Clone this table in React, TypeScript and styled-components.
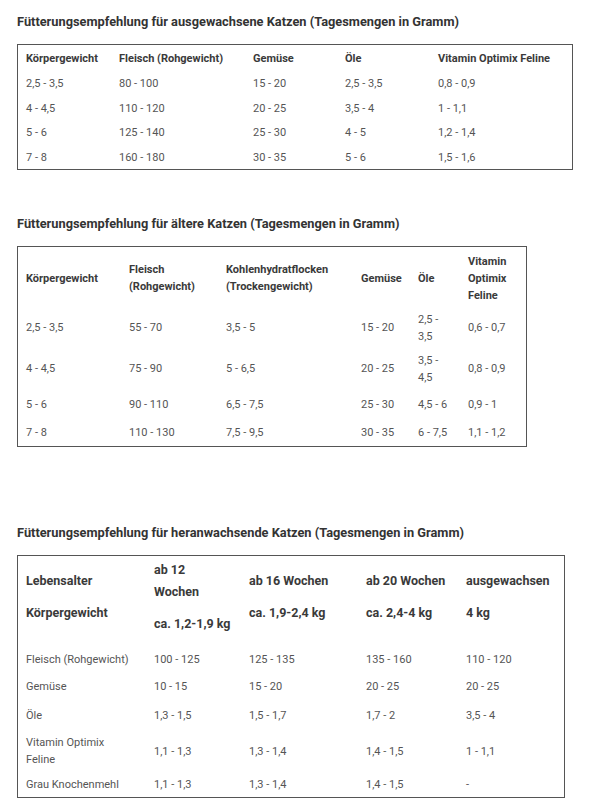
import React from "react";
import styled, { createGlobalStyle } from "styled-components";

const Global = createGlobalStyle`
  html, body { margin: 0; padding: 0; background: #fff; }
  body { font-family: Roboto, "Liberation Sans", Arial, sans-serif; color: #555; }
`;

const Page = styled.div`
  padding: 14px 0 0 17px;
  display: flex;
  flex-direction: column;
`;

const Section = styled.section<{ $after: number }>`
  display: flex;
  flex-direction: column;
  align-items: flex-start;
  margin-bottom: ${(p) => p.$after}px;
`;

const Heading = styled.h3`
  margin: 0 0 14px 0;
  font-size: 12.8px;
  line-height: 16px;
  font-weight: 700;
  color: #333;
`;

const Table = styled.table<{ $w: number }>`
  width: ${(p) => p.$w}px;
  border: 1px solid #555;
  border-collapse: separate;
  border-spacing: 0;
  table-layout: fixed;
`;

const Col = styled.col<{ $w: number }>`
  width: ${(p) => p.$w}px;
`;

const Row = styled.tr<{ $h: number }>`
  height: ${(p) => p.$h}px;
`;

const Th = styled.th<{ $big?: boolean }>`
  text-align: left;
  vertical-align: middle;
  padding: ${(p) => (p.$big ? "2px 10px 0 8px" : "0 6px 0 8px")};
  font-weight: 700;
  font-size: ${(p) => (p.$big ? "12.5px" : "11px")};
  line-height: ${(p) => (p.$big ? "22px" : "17px")};
  color: #3a3a3a;
`;

const Td = styled.td`
  vertical-align: middle;
  padding: 0 12px 0 8px;
  font-size: 11px;
  line-height: 17px;
  color: #555;
`;

const P = styled.p<{ $nowrap?: boolean }>`
  margin: 0 0 10px 0;
  white-space: ${(p) => (p.$nowrap ? "nowrap" : "normal")};
`;

type Simple = {
  title: string;
  width: number;
  cols: number[];
  head: string[];
  headH: number;
  rows: { h: number; cells: string[] }[];
  after: number;
};

const t1: Simple = {
  title: "Fütterungsempfehlung für ausgewachsene Katzen (Tagesmengen in Gramm)",
  width: 556,
  cols: [93, 134, 92, 93, 142],
  head: ["Körpergewicht", "Fleisch (Rohgewicht)", "Gemüse", "Öle", "Vitamin Optimix Feline"],
  headH: 26,
  rows: [
    { h: 25, cells: ["2,5 - 3,5", "80 - 100", "15 - 20", "2,5 - 3,5", "0,8 - 0,9"] },
    { h: 24, cells: ["4 - 4,5", "110 - 120", "20 - 25", "3,5 - 4", "1 - 1,1"] },
    { h: 25, cells: ["5 - 6", "125 - 140", "25 - 30", "4 - 5", "1,2 - 1,4"] },
    { h: 24, cells: ["7 - 8", "160 - 180", "30 - 35", "5 - 6", "1,5 - 1,6"] },
  ],
  after: 46,
};

const t2: Simple = {
  title: "Fütterungsempfehlung für ältere Katzen (Tagesmengen in Gramm)",
  width: 510,
  cols: [103, 97, 135, 57, 50, 66],
  head: [
    "Körpergewicht",
    "Fleisch (Rohgewicht)",
    "Kohlenhydratflocken (Trockengewicht)",
    "Gemüse",
    "Öle",
    "Vitamin Optimix Feline",
  ],
  headH: 62,
  rows: [
    { h: 37, cells: ["2,5 - 3,5", "55 - 70", "3,5 - 5", "15 - 20", "2,5 - 3,5", "0,6 - 0,7"] },
    { h: 45, cells: ["4 - 4,5", "75 - 90", "5 - 6,5", "20 - 25", "3,5 - 4,5", "0,8 - 0,9"] },
    { h: 27, cells: ["5 - 6", "90 - 110", "6,5 - 7,5", "25 - 30", "4,5 - 6", "0,9 - 1"] },
    { h: 28, cells: ["7 - 8", "110 - 130", "7,5 - 9,5", "30 - 35", "6 - 7,5", "1,1 - 1,2"] },
  ],
  after: 78,
};

const SimpleTable: React.FC<{ d: Simple }> = ({ d }) => (
  <Section $after={d.after}>
    <Heading>{d.title}</Heading>
    <Table $w={d.width}>
      <colgroup>
        {d.cols.map((w, i) => (
          <Col key={i} $w={w} />
        ))}
      </colgroup>
      <thead>
        <Row $h={d.headH}>
          {d.head.map((h) => (
            <Th key={h}>{h}</Th>
          ))}
        </Row>
      </thead>
      <tbody>
        {d.rows.map((r, i) => (
          <Row key={i} $h={r.h}>
            {r.cells.map((c, j) => (
              <Td key={j}>{c}</Td>
            ))}
          </Row>
        ))}
      </tbody>
    </Table>
  </Section>
);

const growHead: [string, string][] = [
  ["Lebensalter", "Körpergewicht"],
  ["ab 12 Wochen", "ca. 1,2-1,9 kg"],
  ["ab 16 Wochen", "ca. 1,9-2,4 kg"],
  ["ab 20 Wochen", "ca. 2,4-4 kg"],
  ["ausgewachsen", "4 kg"],
];

const growRows: { h: number; cells: string[] }[] = [
  { h: 29, cells: ["Fleisch (Rohgewicht)", "100 - 125", "125 - 135", "135 - 160", "110 - 120"] },
  { h: 25, cells: ["Gemüse", "10 - 15", "15 - 20", "20 - 25", "20 - 25"] },
  { h: 32, cells: ["Öle", "1,3 - 1,5", "1,5 - 1,7", "1,7 - 2", "3,5 - 4"] },
  { h: 40, cells: ["Vitamin Optimix Feline", "1,1 - 1,3", "1,3 - 1,4", "1,4 - 1,5", "1 - 1,1"] },
  { h: 26, cells: ["Grau Knochenmehl", "1,1 - 1,3", "1,3 - 1,4", "1,4 - 1,5", "-"] },
];

const GrowTable: React.FC = () => (
  <Section $after={10}>
    <Heading>Fütterungsempfehlung für heranwachsende Katzen (Tagesmengen in Gramm)</Heading>
    <Table $w={548}>
      <colgroup>
        {[128, 95, 117, 100, 106].map((w, i) => (
          <Col key={i} $w={w} />
        ))}
      </colgroup>
      <thead>
        <Row $h={89}>
          {growHead.map(([age, weight], i) => (
            <Th key={i} $big>
              <P>{age}</P>
              <P $nowrap>{weight}</P>
            </Th>
          ))}
        </Row>
      </thead>
      <tbody>
        {growRows.map((r, i) => (
          <Row key={i} $h={r.h}>
            {r.cells.map((c, j) => (
              <Td key={j}>{c}</Td>
            ))}
          </Row>
        ))}
      </tbody>
    </Table>
  </Section>
);

export default function App() {
  return (
    <>
      <Global />
      <Page>
        <SimpleTable d={t1} />
        <SimpleTable d={t2} />
        <GrowTable />
      </Page>
    </>
  );
}
